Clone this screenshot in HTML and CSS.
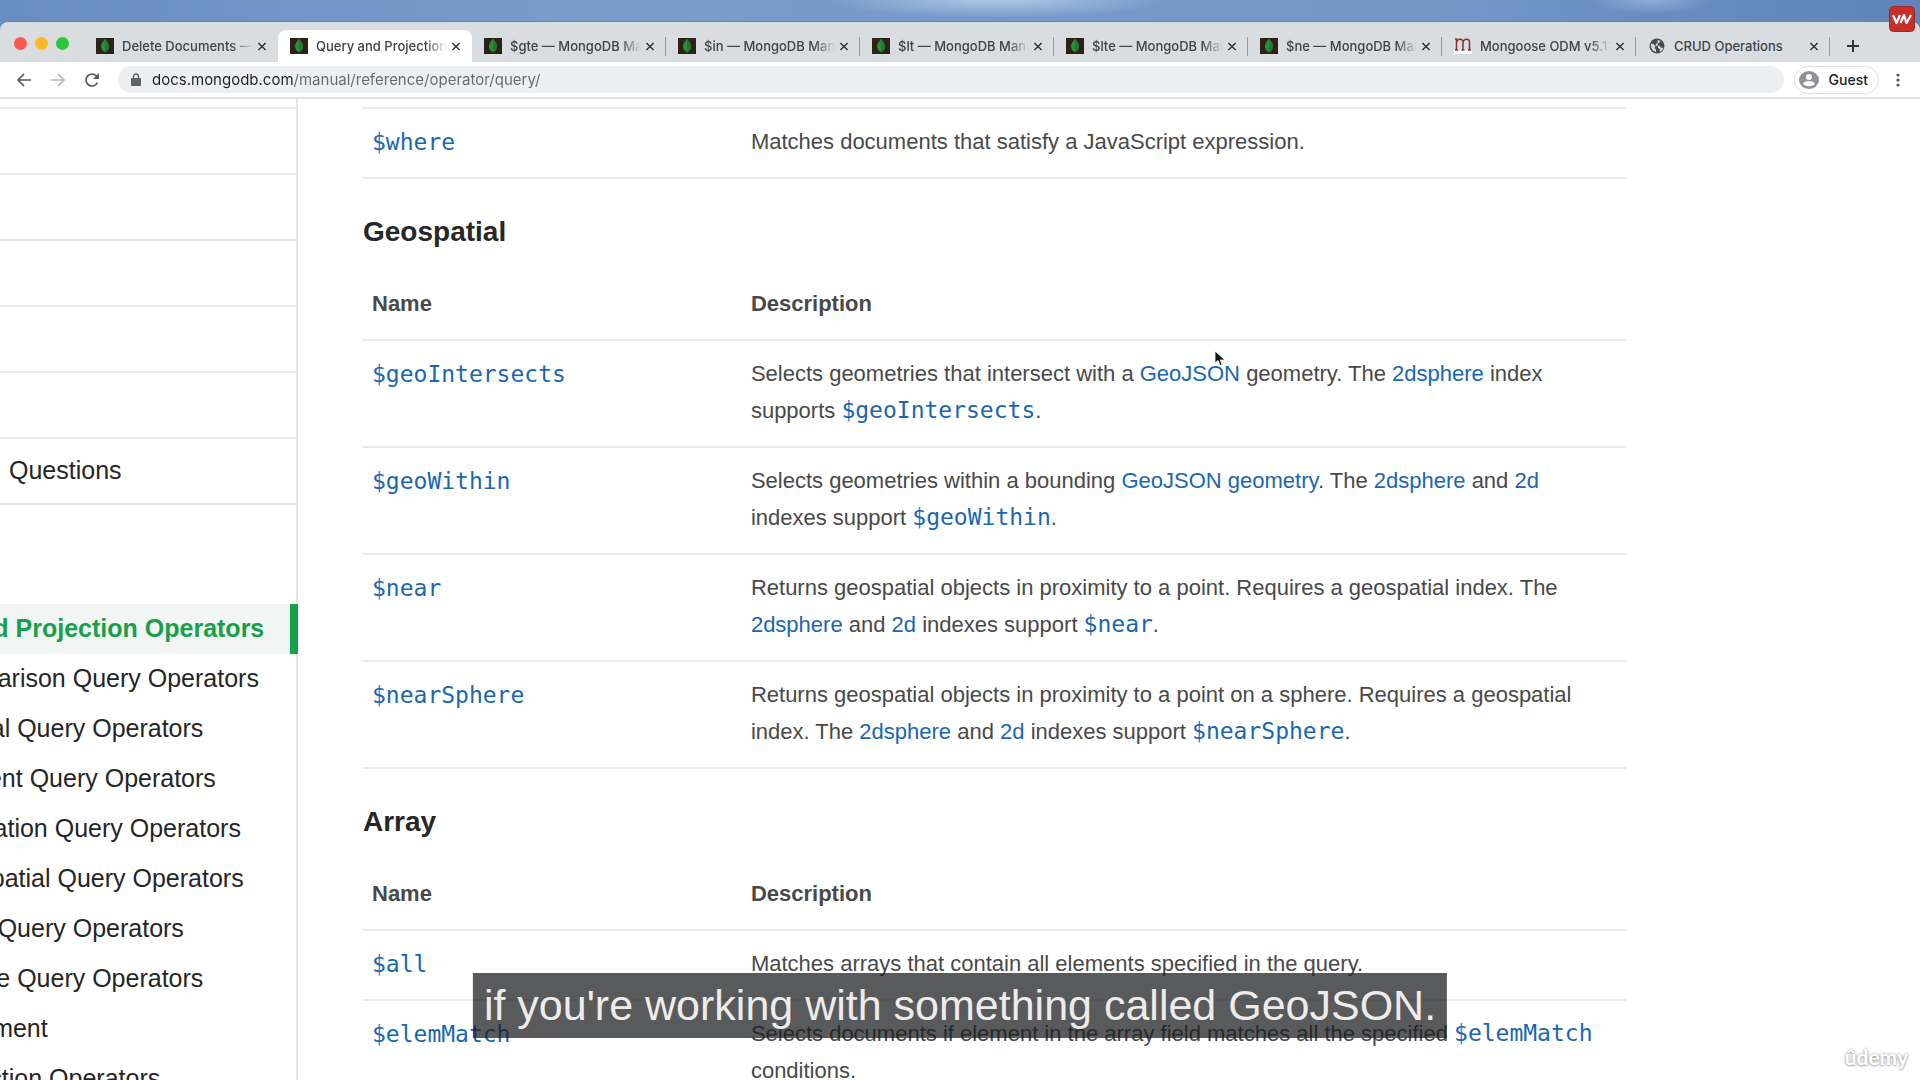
FILE: index.html
```html
<!DOCTYPE html>
<html lang="en">
<head>
<meta charset="utf-8">
<title>Query and Projection Operators — MongoDB Manual</title>
<link rel="stylesheet" href="styles.css">
</head>
<body>
<svg class="defs" width="0" height="0" aria-hidden="true">
  <symbol id="leaf" viewBox="0 0 18 16">
    <rect width="18" height="16" fill="#2e2217"/>
    <path d="M9 1C6 4 4.800 6.500 5 9c.2 2.500 2 4 4 5.500 2-1.500 3.800-3 4-5.500.2-2.500-1-5-4-8z" fill="#2a8f3c"/>
    <path d="M9 1c3 3 4.200 5.500 4 8-.2 2.500-2 4-4 5.500z" fill="#1d7a30"/>
  </symbol>
  <symbol id="cross" viewBox="0 0 10 10">
    <path d="M1 1l8 8M9 1l-8 8" fill="none" stroke="currentColor" stroke-width="1.600"/>
  </symbol>
</svg>
<div class="screen">
  <div class="desktop"></div>
  <header class="browser">
    <div class="tabs">
      <div class="lights"><span class="light red"></span><span class="light amber"></span><span class="light green"></span></div>
      <div class="tab"><svg class="fav"><use href="#leaf"/></svg><button class="title">Delete Documents — MongoDB</button><button class="close" aria-label="Close tab"><svg><use href="#cross"/></svg></button></div>
      <div class="tab active"><svg class="fav"><use href="#leaf"/></svg><button class="title">Query and Projection Operators</button><button class="close" aria-label="Close tab"><svg><use href="#cross"/></svg></button></div>
      <div class="tab"><svg class="fav"><use href="#leaf"/></svg><button class="title">$gte — MongoDB Manual</button><button class="close" aria-label="Close tab"><svg><use href="#cross"/></svg></button></div>
      <div class="tab"><svg class="fav"><use href="#leaf"/></svg><button class="title">$in — MongoDB Manual</button><button class="close" aria-label="Close tab"><svg><use href="#cross"/></svg></button></div>
      <div class="tab"><svg class="fav"><use href="#leaf"/></svg><button class="title">$lt — MongoDB Manual</button><button class="close" aria-label="Close tab"><svg><use href="#cross"/></svg></button></div>
      <div class="tab"><svg class="fav"><use href="#leaf"/></svg><button class="title">$lte — MongoDB Manual</button><button class="close" aria-label="Close tab"><svg><use href="#cross"/></svg></button></div>
      <div class="tab"><svg class="fav"><use href="#leaf"/></svg><button class="title">$ne — MongoDB Manual</button><button class="close" aria-label="Close tab"><svg><use href="#cross"/></svg></button></div>
      <div class="tab"><svg class="fav" viewBox="0 0 18 16"><path d="M0 12h18v4H0z" fill="#fff"/><path d="M1 1h1.500v11M2.500 4c1-3.500 6.500-4 6.500 0v8M9 4c1-3.500 6.500-4 6.500 0v8M1 12h3M7.500 12h3M14 12h3" fill="none" stroke="#85302c" stroke-width="1.500"/></svg><button class="title">Mongoose ODM v5.11.8</button><button class="close" aria-label="Close tab"><svg><use href="#cross"/></svg></button></div>
      <div class="tab"><svg class="fav" viewBox="0 0 18 16"><circle cx="9" cy="8" r="7.500" fill="#46494d"/><path d="M3 5.500l3 1 1.500 2-1 1.500 1.500 1.500v2.500C4.500 13 2.500 10 3 5.500zM9.500 2l3 1-1.500 2-3 .500-.500 2 4 .200 1.500 2h2.500c-.500 2-2 3.500-4 4l.5-2.500-2-1.500" fill="#dadde0"/></svg><button class="title">CRUD Operations</button><button class="close" aria-label="Close tab"><svg><use href="#cross"/></svg></button></div>
      <button class="new-tab" aria-label="New tab"><svg width="14" height="14" viewBox="0 0 14 14"><path d="M7 1v12M1 7h12" stroke="currentColor" stroke-width="2"/></svg></button>
    </div>
    <div class="toolbar">
      <button class="nav-btn" aria-label="Back"><svg viewBox="0 0 16 16"><path d="M15 8H2M8 2L2 8l6 6"/></svg></button>
      <button class="nav-btn off" aria-label="Forward"><svg viewBox="0 0 16 16"><path d="M1 8h13M8 2l6 6-6 6"/></svg></button>
      <button class="nav-btn" aria-label="Reload"><svg viewBox="0 0 16 16"><path d="M13.500 10.500A6 6 0 1 1 12.500 4"/><path class="solid" d="M15 1v6H9z"/></svg></button>
      <label class="address">
        <svg width="10" height="13" viewBox="0 0 10 13"><rect y="5" width="10" height="8" rx="1" fill="#5f6368"/><path d="M2.500 5.500V3.500a2.500 2.500 0 0 1 5 0v2" fill="none" stroke="#5f6368" stroke-width="1.400"/></svg>
        <input type="text" aria-label="Address" value="docs.mongodb.com/manual/reference/operator/query/">
      </label>
      <button class="guest"><svg width="20" height="18" viewBox="0 0 20 18"><ellipse cx="10" cy="9" rx="10" ry="9" fill="#8c9297"/><circle cx="10" cy="6" r="3" fill="#fff"/><path d="M4 13c1-4 11-4 12 0-3 3-9 3-12 0z" fill="#fff"/></svg>Guest</button>
      <button class="menu" aria-label="Menu"><svg width="4" height="14" viewBox="0 0 4 14"><circle cx="2" cy="2" r="1.600"/><circle cx="2" cy="7" r="1.600"/><circle cx="2" cy="12" r="1.600"/></svg></button>
    </div>
  </header>
  <div class="page">
    <nav class="sidebar">
      <ul class="sections">
        <li></li><li></li><li></li><li></li><li></li><li></li>
        <li><a href="#faq">Questions</a></li>
      </ul>
      <ul class="topics">
        <li class="current"><a href="#query">Query and Projection Operators</a></li>
        <li><a href="#comparison">Comparison Query Operators</a></li>
        <li><a href="#logical">Logical Query Operators</a></li>
        <li><a href="#element">Element Query Operators</a></li>
        <li><a href="#evaluation">Evaluation Query Operators</a></li>
        <li><a href="#geo">Geospatial Query Operators</a></li>
        <li><a href="#array">Array Query Operators</a></li>
        <li><a href="#bitwise">Bitwise Query Operators</a></li>
        <li><a href="#comment">$comment</a></li>
        <li><a href="#projection">Projection Operators</a></li>
      </ul>
    </nav>
    <main class="content">
      <table class="continued">
        <tbody>
          <tr><td><a href="#w"><code>$where</code></a></td><td>Matches documents that satisfy a JavaScript expression.</td></tr>
        </tbody>
      </table>
      <h3 id="geo">Geospatial</h3>
      <table>
        <thead><tr><th>Name</th><th>Description</th></tr></thead>
        <tbody>
          <tr><td><a href="#gi"><code>$geoIntersects</code></a></td><td>Selects geometries that intersect with a <a href="#gj">GeoJSON</a> geometry. The <a href="#2ds">2dsphere</a> index supports <a href="#gi"><code>$geoIntersects</code></a>.</td></tr>
          <tr><td><a href="#gw"><code>$geoWithin</code></a></td><td>Selects geometries within a bounding <a href="#gj">GeoJSON geometry</a>. The <a href="#2ds">2dsphere</a> and <a href="#2d">2d</a> indexes support <a href="#gw"><code>$geoWithin</code></a>.</td></tr>
          <tr><td><a href="#n"><code>$near</code></a></td><td>Returns geospatial objects in proximity to a point. Requires a geospatial index. The <a href="#2ds">2dsphere</a> and <a href="#2d">2d</a> indexes support <a href="#n"><code>$near</code></a>.</td></tr>
          <tr><td><a href="#ns"><code>$nearSphere</code></a></td><td>Returns geospatial objects in proximity to a point on a sphere. Requires a geospatial index. The <a href="#2ds">2dsphere</a> and <a href="#2d">2d</a> indexes support <a href="#ns"><code>$nearSphere</code></a>.</td></tr>
        </tbody>
      </table>
      <h3 id="array">Array</h3>
      <table>
        <thead><tr><th>Name</th><th>Description</th></tr></thead>
        <tbody>
          <tr><td><a href="#all"><code>$all</code></a></td><td>Matches arrays that contain all elements specified in the query.</td></tr>
          <tr><td><a href="#em"><code>$elemMatch</code></a></td><td>Selects documents if element in the array field matches all the specified <a href="#em"><code>$elemMatch</code></a> conditions.</td></tr>
        </tbody>
      </table>
    </main>
  </div>
  <p class="caption">if you're working with something called GeoJSON.</p>
  <div class="watermark">ûdemy</div>
  <div class="recorder"><svg width="26" height="26" viewBox="0 0 26 26"><rect x=".5" y=".5" width="25" height="25" rx="4" fill="#c7302a" stroke="#a32722"/><path d="M4 9l3.500 8L11 9M11.500 17L15 9l2.500 8L22 9" fill="none" stroke="#fff" stroke-width="2.200" stroke-linejoin="round"/></svg></div>
  <svg class="pointer" width="12" height="17" viewBox="0 0 12 17"><path d="M1 1v12l3-2.500 2.200 5 2-1-2-4.500H11z" fill="#111" stroke="#fff" stroke-width=".8"/></svg>
</div>
</body>
</html>
```
FILE: styles.css
```css
* { box-sizing: border-box; }
body {
  margin: 0;
  background: #fff;
  color: #494949;
  font-family: "Liberation Sans", Arial, sans-serif;
  font-size: 22px;
}
button { padding: 0; border: 0; background: none; color: inherit; font: inherit; }
ul { margin: 0; padding: 0; list-style: none; }
a { color: #1a67b0; text-decoration: none; }
.defs { position: absolute; }
.screen {
  position: relative;
  display: flex;
  flex-direction: column;
  height: 100vh;
  overflow: hidden;
}
.desktop {
  flex: none;
  height: 32px;
  margin-bottom: -10px;
  background:
    radial-gradient(ellipse 170px 18px at 52% 0, #b0c8e6, transparent),
    radial-gradient(ellipse 60px 14px at 86% 0, #8fadd6, transparent),
    linear-gradient(90deg, #6a8dc3, #7a9ccb 30%, #7497c8 75%, #5f82b8);
}

/* Browser chrome */
.browser {
  position: relative;
  flex: none;
  font-family: Inter, sans-serif;
  font-size: 13px;
}
.tabs {
  display: flex;
  height: 40px;
  padding-top: 8px;
  border-radius: 8px 8px 0 0;
  background: #dadde0;
  box-shadow: 0 -1px 0 #6484b3;
  color: #3f4246;
}
.lights { display: flex; flex: none; gap: 8px; width: 84px; padding: 7px 0 0 14px; }
.light { width: 13px; height: 13px; border-radius: 50%; }
.red { background: #fc5650; }
.amber { background: #fdb827; }
.green { background: #27c83c; }
.tab {
  position: relative;
  display: flex;
  flex: 0 1 194px;
  align-items: center;
  min-width: 0;
  padding: 0 7px 0 12px;
}
.tab::after {
  content: "";
  position: absolute;
  right: 0;
  top: 7px;
  width: 1px;
  height: 19px;
  background: #96999d;
}
.tab.active { border-radius: 8px 8px 0 0; background: #fff; }
.tab.active::after, .tab:nth-child(2)::after { display: none; }
.fav { flex: none; width: 18px; height: 16px; margin-right: 8px; }
.title {
  flex: 1;
  min-width: 0;
  overflow: hidden;
  font-weight: 500;
  text-align: left;
  white-space: nowrap;
  mask-image: linear-gradient(90deg, #000 84%, transparent);
}
.tab:nth-child(10) .title { mask-image: none; }
.close { flex: none; width: 18px; height: 20px; color: #303236; }
.close svg { display: block; width: 10px; height: 9px; margin: auto; }
.new-tab { width: 46px; color: #303236; }
.new-tab svg { display: block; margin: auto; }
.toolbar {
  display: flex;
  align-items: center;
  height: 37px;
  padding: 0 14px 0 16px;
  border-bottom: 2px solid #dfe1e3;
  background: #fff;
}
.nav-btn { flex: none; width: 16px; height: 16px; margin-right: 18px; }
.nav-btn svg { display: block; fill: none; stroke: #55585c; stroke-width: 1.700; }
.nav-btn.off svg { stroke: #b4b6b9; }
.nav-btn .solid { fill: #55585c; stroke: none; }
.address {
  display: flex;
  flex: 1;
  align-items: center;
  gap: 11px;
  height: 27px;
  margin-right: 10px;
  padding: 0 13px;
  border-radius: 14px;
  background: #eeeff1;
}
.address input {
  flex: 1;
  min-width: 0;
  height: 27px;
  padding: 0;
  border: 0;
  outline: 0;
  background: linear-gradient(90deg, #202124 141px, #66696d 141px) text;
  -webkit-text-fill-color: transparent;
  font: 15px Inter, sans-serif;
}
.guest {
  display: flex;
  align-items: center;
  gap: 10px;
  height: 28px;
  padding: 0 10px 0 4px;
  border: 1px solid #dddfe1;
  border-radius: 14px;
  color: #202124;
  font-size: 14px;
  font-weight: 500;
}
.menu { width: 16px; margin-left: 11px; }
.menu svg { display: block; margin: auto; fill: #505357; }

/* Documentation page */
.page { display: flex; flex: 1; min-height: 0; overflow: hidden; }
.sidebar {
  flex: none;
  width: 298px;
  border-right: 2px solid #e3e6e7;
  font-size: 25px;
  white-space: nowrap;
}
.sidebar a { color: #252626; }
.sections { margin: -56px 0 99px; }
.sections li {
  height: 66px;
  padding-left: 9px;
  border-bottom: 2px solid #e6e9ea;
  line-height: 62px;
}
.topics li { height: 50px; line-height: 48px; }
.topics a { margin-left: -69px; }
.topics .current {
  margin-right: -2px;
  border-right: 8px solid #17a049;
  background: #f2f5f4;
  font-weight: bold;
}
.topics .current a { margin-left: -115px; color: #17a049; }
.content { flex: 1; min-width: 0; padding: 8px 294px 0 65px; }
table { width: 100%; border-collapse: separate; border-spacing: 0; table-layout: fixed; }
.continued { border-top: 2px solid #e9eaea; }
th, td {
  padding: 14px 9px 17px;
  border-bottom: 2px solid #e9eaea;
  line-height: 37px;
  text-align: left;
  vertical-align: top;
}
th { padding: 15px 9px 17px; }
td:first-child { padding-top: 15px; padding-bottom: 16px; }
th:first-child, td:first-child { width: 30%; }
code { font: 23px/1 "DejaVu Sans Mono", monospace; }
h3 { margin: 35px 0 20px; color: #262727; font-size: 28px; line-height: 36px; }

/* Overlays */
.caption {
  position: absolute;
  bottom: 42px;
  left: 50%;
  margin: 0;
  padding: 0 11px;
  transform: translateX(-50%);
  background: rgba(28, 29, 31, .73);
  color: #eeecea;
  font-size: 43px;
  line-height: 65px;
  white-space: nowrap;
}
.watermark {
  position: absolute;
  right: 12px;
  bottom: 9px;
  color: #fff;
  font: bold 21px/28px Lato, sans-serif;
  text-shadow: 0 0 3px #999, 0 1px 2px #bbb;
}
.recorder { position: absolute; top: 6px; right: 5px; }
.recorder svg { display: block; }
.pointer { position: absolute; top: 350px; left: 1214px; }
```
